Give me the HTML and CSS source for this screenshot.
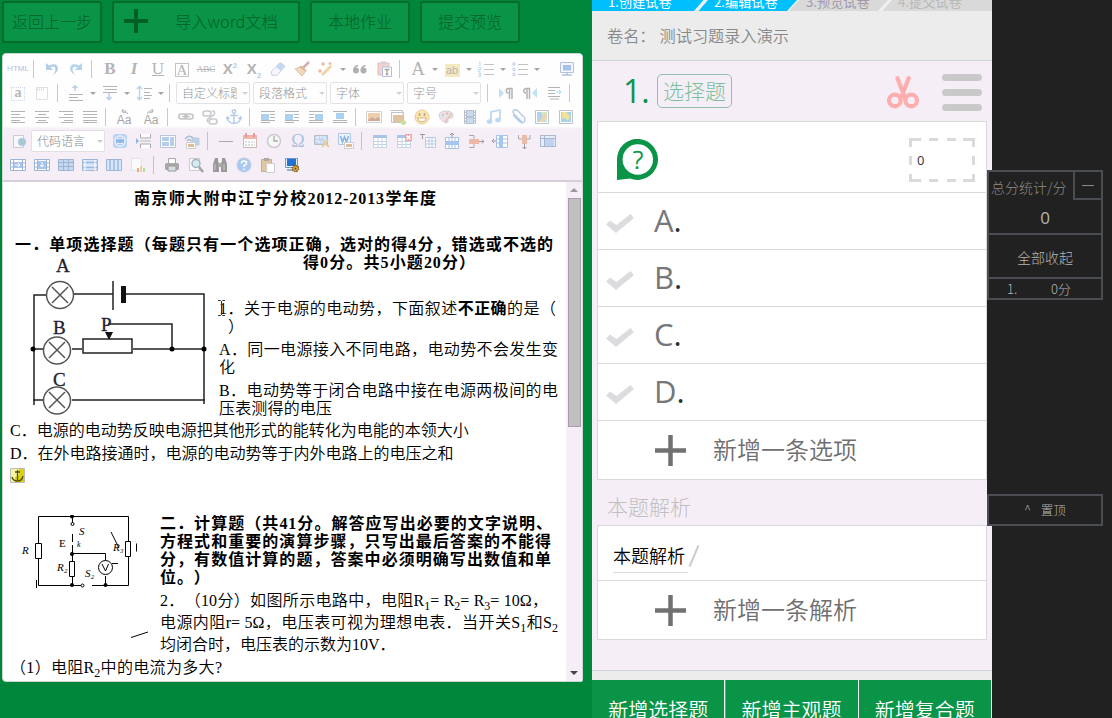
FILE: index.html
```html
<!DOCTYPE html>
<html lang="zh-CN">
<head>
<meta charset="utf-8">
<title>试卷录入</title>
<link rel="stylesheet" href="styles.css">
</head>
<body>
<svg class="sprite">
  <symbol id="undo" viewBox="0 0 16 16"><path d="M2 2v7h7L6.500 6.500Q11 4 11.500 8 11.500 11 9 14 14 11 14 7 13 1 5 4.500z" fill="#a9c8ea"/></symbol>
  <symbol id="redo" viewBox="0 0 16 16"><path d="M14 2v7H7l2.500-2.500Q5 4 4.500 8 4.500 11 7 14 2 11 2 7 3 1 11 4.500z" fill="#a9cdec"/></symbol>
  <symbol id="eraser" viewBox="0 0 16 16"><path d="M1 11 10 1.500 15 5 7 14.500 2 14z" fill="#f4f6fb" stroke="#c4cbd9"/><path d="M6 6 10 1.500 15 5 11 10z" fill="#bcd2ef"/></symbol>
  <symbol id="brush" viewBox="0 0 16 16"><path d="M15 1 9 7" stroke="#c9a8a0" stroke-width="2.500"/><path d="M1 8 8 5l4 5-4 5z" fill="#f0d6b0" stroke="#dcb99a"/><path d="M6 5.500 12 10" stroke="#d99" stroke-width="1.500"/></symbol>
  <symbol id="wand" viewBox="0 0 16 16"><path d="M4 14 13 5" stroke="#f0d09a" stroke-width="3"/><path d="M5 1v4M3 3h4M12 1v3M10.500 2.500h3M2 8v4M0 10h4" stroke="#eab79c" stroke-width="1.600"/></symbol>
  <symbol id="quote" viewBox="0 0 16 16"><g fill="#a6a6a6"><circle cx="4" cy="9.500" r="3"/><circle cx="11.500" cy="9.500" r="3"/></g><path d="M2 9.500Q2 5.500 6 4.500M9.500 9.500Q9.500 5.500 13.500 4.500" fill="none" stroke="#a6a6a6" stroke-width="1.800"/></symbol>
  <symbol id="paste" viewBox="0 0 16 16"><path d="M2 2h11v12H2z" fill="#f0cfc8" stroke="#dfb9b0"/><path d="M5 .500h5v3H5z" fill="#ccc"/><path d="M6.500 6h9v9.500h-9z" fill="#fff" stroke="#a9b6d6"/><path d="M8.500 8.500h5M11 8.500v5M9.700 13.500h2.600" stroke="#999" stroke-width="1.400"/></symbol>
  <symbol id="ol" viewBox="0 0 16 16"><path d="M6 3.500h10M6 8.500h10M6 13.500h10" stroke="#bbb"/><path d="M1 1h1v4M.500 6.500h2v2h-2v2h2M.500 12h2v3.500h-2m0-1.700h2" stroke="#b7d4ee" fill="none"/></symbol>
  <symbol id="ul" viewBox="0 0 16 16"><path d="M6 3.500h10M6 8.500h10M6 13.500h10" stroke="#bbb"/><g fill="none" stroke="#b7c4ee"><circle cx="2" cy="3" r="1.300"/><circle cx="2" cy="8.500" r="1.300"/><circle cx="2" cy="13.500" r="1.300"/></g></symbol>
  <symbol id="screen" viewBox="0 0 16 16"><path d="M1.500 1.500h13v10h-13z" fill="#f2f5fc" stroke="#a9b8dc"/><path d="M4 4h8v5.500H4z" fill="#9bb9e8"/><path d="M3 14h10M8 12v2" stroke="#a9b8dc" stroke-width="1.500"/></symbol>
  <symbol id="page" viewBox="0 0 16 16"><path d="M2.500 2.500h11v12h-11z" fill="#fff" stroke="#ddd"/><path d="M3 4.500h8" stroke="#ddc8e2" stroke-width="2" stroke-dasharray="1 1"/></symbol>
  <symbol id="rowup" viewBox="0 0 16 16"><path d="M1 9.500h14M1 12.500h9M1 15.500h14" stroke="#aaa"/><path d="M7 0v6M4.500 3 7 .700 9.500 3" stroke="#b0c9ee" fill="none" stroke-width="1.500"/></symbol>
  <symbol id="rowdn" viewBox="0 0 16 16"><path d="M1 1.500h14M3 4.500h12M1 7.500h14" stroke="#aaa"/><path d="M7 8v7M4.500 12 7 14.700 9.500 12" stroke="#b0c9ee" fill="none" stroke-width="1.500"/></symbol>
  <symbol id="lh" viewBox="0 0 16 16"><path d="M8 3.500h8M8 7.500h6M8 10.500h8M8 13.500h6" stroke="#aaa"/><path d="M3.500 1v14M1 4l2.500-2.700L6 4M1 12l2.500 2.700L6 12" stroke="#b0cdee" fill="none" stroke-width="1.400"/></symbol>
  <symbol id="ltr" viewBox="0 0 16 16"><path d="m1 3 5 5-5 5z" fill="#b5dff2"/><path d="M11.500 14V3.500h-1a2 2 0 0 0 0 4.500M14 14V3.500h-3" fill="none" stroke="#aaa" stroke-width="1.500"/></symbol>
  <symbol id="rtl" viewBox="0 0 16 16"><path d="m15 3-5 5 5 5z" fill="#b5dff2"/><path d="M5 14V3.500H4A2 2 0 0 0 4 8M7.500 14V3.500H4" fill="none" stroke="#aaa" stroke-width="1.500"/></symbol>
  <symbol id="indent" viewBox="0 0 16 16"><path d="M2 2.500h12M2 5.500h7M2 8.500h7M2 11.500h12M4 14h9" stroke="#aaa"/><path d="M10 7h5m-2-2 2 2-2 2" stroke="#9dd0ec" fill="none"/></symbol>
  <symbol id="al" viewBox="0 0 16 16"><path d="M1 2.500h14M1 5.500h9M1 8.500h14M1 11.500h9M1 13.500h14" stroke="#aaa"/></symbol>
  <symbol id="ac" viewBox="0 0 16 16"><path d="M1 2.500h14M4 5.500h8M1 8.500h14M4 11.500h8M2 13.500h12" stroke="#aaa"/></symbol>
  <symbol id="ar" viewBox="0 0 16 16"><path d="M1 2.500h14M6 5.500h9M1 8.500h14M6 11.500h9M3 13.500h12" stroke="#aaa"/></symbol>
  <symbol id="aj" viewBox="0 0 16 16"><path d="M1 2.500h14M1 5.500h14M1 8.500h14M1 11.500h14M1 13.500h14" stroke="#aaa"/></symbol>
  <symbol id="arcl" viewBox="0 0 12 6"><path d="M10.500 6Q9 1 3 2.500M4.500 0v4h4" fill="none" stroke="#999"/></symbol>
  <symbol id="arcr" viewBox="0 0 12 6"><path d="M1.500 6Q3 1 9 2.500M7.500 0v4h-4" fill="none" stroke="#999"/></symbol>
  <symbol id="link" viewBox="0 0 16 16"><g fill="none" stroke="#bbb" stroke-width="1.500"><rect x=".800" y="5" width="8" height="5" rx="2.500"/><rect x="7" y="5" width="8" height="5" rx="2.500"/><path d="M4 7.500h8"/></g></symbol>
  <symbol id="unlink" viewBox="0 0 16 16"><g fill="none" stroke="#c2c2c8" stroke-width="1.500"><rect x="1" y="2" width="8" height="5" rx="2.500"/><rect x="7" y="10" width="8" height="5" rx="2.500"/><path d="M10 2q4 0 2 4L7 9q-3 2-1 4"/></g></symbol>
  <symbol id="anchor" viewBox="0 0 16 16"><g fill="none" stroke="#afc6e4" stroke-width="1.500"><circle cx="8" cy="2.500" r="1.700"/><path d="M8 4v11M4 6.500h8M1.500 8.500q0 5.500 6.500 6 6.500-.500 6.500-6M0 10l1.500-2L3.500 10M12.500 10l2-2L16 10"/></g></symbol>
  <symbol id="fl" viewBox="0 0 16 16"><path d="M1 2.500h14M10 5.500h5M10 8.500h5M1 11.500h14M1 13.500h9" stroke="#aaa"/><path d="M1 5h8v6H1z" fill="#a2cdee"/></symbol>
  <symbol id="fr" viewBox="0 0 16 16"><path d="M1 2.500h14M1 5.500h5M1 8.500h5M1 11.500h14M1 13.500h14" stroke="#aaa"/><path d="M7 5h8v6H7z" fill="#a2cdee"/></symbol>
  <symbol id="fc" viewBox="0 0 16 16"><path d="M1 2.500h14M1 13.500h14M1 11.500h14" stroke="#aaa"/><path d="M4 4h8v6H4z" fill="#9ccdf0"/></symbol>
  <symbol id="pic" viewBox="0 0 16 16"><path d="M.500 2.500h15v11H.500z" fill="#fff" stroke="#ccc"/><path d="M2 4h12v8H2z" fill="#efc9a2"/><path d="m2 11 4-3 3 2 3-2 2 2v2H2z" fill="#c99f88"/></symbol>
  <symbol id="pics" viewBox="0 0 16 16"><path d="M.500 1.500h12v3M1.500 3.500h12v10h-12z" fill="#fff" stroke="#bbb"/><path d="M3 6h10v7H3z" fill="#dfbb92"/><circle cx="13.500" cy="13.500" r="2.500" fill="#bfe08b"/></symbol>
  <symbol id="smile" viewBox="0 0 16 16"><circle cx="8" cy="8" r="7" fill="#fbe3a6" stroke="#eac58c"/><path d="M5.500 4v3M10.500 4v3" stroke="#a98" stroke-width="1.500"/><path d="M3.500 9h9q-1 4-4.500 4T3.500 9z" fill="#fff" stroke="#d8a670"/></symbol>
  <symbol id="palette" viewBox="0 0 16 16"><path d="M8 2q7 0 7 5 0 3-4 2-2 0-1 3 0 3-4 1Q1 10 1 6q1-4 7-4z" fill="#eadcea" stroke="#d4c6dc"/><path d="m7 13 7-9" stroke="#dfc49d" stroke-width="2"/><circle cx="5" cy="6" r="1.200" fill="#a8d5a8"/><circle cx="9" cy="4.500" r="1.200" fill="#eaa"/></symbol>
  <symbol id="film" viewBox="0 0 16 16"><path d="M2 1h12v14H2z" fill="#b2b8c4"/><path d="M5 2h6v5H5zM5 9h6v5H5z" fill="#bed6f2"/><path d="M3.500 1v14M12.500 1v14" stroke="#fff" stroke-dasharray="1.500 1.500"/></symbol>
  <symbol id="music" viewBox="0 0 16 16"><path d="M5 12V3l9-2v9" stroke="#b5d0ec" fill="none" stroke-width="1.700"/><ellipse cx="3.500" cy="12.500" rx="2.800" ry="2.300" fill="#b5d3f0"/><ellipse cx="12" cy="11" rx="2.800" ry="2.300" fill="#b5d3f0"/></symbol>
  <symbol id="clip" viewBox="0 0 16 16"><path d="m12 13-8-8q-2-3 0-4 2-1 4 1l6 6q2 3 0 5-2 2-5-1L3 6" fill="none" stroke="#a9c4e6" stroke-width="1.400"/></symbol>
  <symbol id="map" viewBox="0 0 16 16"><path d="M1.500 1.500h13v13h-13z" fill="#fff" stroke="#b4bcc4"/><path d="M3 3h10v10H3z" fill="#cfe4bd"/><path d="M3 3h4l4 10H3z" fill="#a8cfe8"/><path d="m5 13 5-8h3v3l-4 5z" fill="#ecd0aa"/></symbol>
  <symbol id="map2" viewBox="0 0 16 16"><path d="M1.500 1.500h13v13h-13z" fill="#fff" stroke="#b4bcc4"/><path d="M3 3h10v10H3z" fill="#98ccea"/><path d="M4 3h4l4 4-2 5-3-3-3 1z" fill="#eee08d"/></symbol>
  <symbol id="globe" viewBox="0 0 16 16"><path d="M2.500 2.500h10v12h-10z" fill="#f8f8f8" stroke="#ccc"/><circle cx="11" cy="9" r="4" fill="#a9c6e8"/><path d="m9 7 4 1-2 4z" fill="#a5d0a5"/></symbol>
  <symbol id="app" viewBox="0 0 16 16"><rect x="1" y="1" width="14" height="14" rx="3" fill="#bcd4f4"/><circle cx="8" cy="8" r="5" fill="#92b8e8" stroke="#eef" stroke-width="1.500"/><path d="M5 6q3-2 6 0M5 10q3 2 6 0" stroke="#fff" fill="none"/></symbol>
  <symbol id="break" viewBox="0 0 16 16"><path d="M4.500 1v4h10V1M4.500 15v-4h10v4" fill="#fff" stroke="#a9a9b0"/><path d="M4 8h11" stroke="#bbb"/><path d="m0 5 3 3-3 3z" fill="#8db4d8"/></symbol>
  <symbol id="tpl" viewBox="0 0 16 16"><path d="M.500 2.500h15v12H.500z" fill="#fff" stroke="#b6c4da"/><path d="M2 4h7v4H2zM10 4h4v9h-4zM2 9h7v4H2z" fill="#b5cdec"/></symbol>
  <symbol id="wifi" viewBox="0 0 16 16"><path d="M8 5h7v7H8z" fill="#bbd1ed" stroke="#c3cbd8"/><path d="M1 6q4-5 8-1M3 8q2-3 4 0" stroke="#a8bcd5" fill="none" stroke-width="1.500"/><path d="M2.500 9.500h9v6h-9z" fill="#fff" stroke="#ccc"/><path d="M4 11h6v3H4z" fill="#e0bd94"/></symbol>
  <symbol id="hr" viewBox="0 0 16 16"><path d="M1 8.500h14" stroke="#a9a9a9"/></symbol>
  <symbol id="cal" viewBox="0 0 16 16"><path d="M1.500 2.500h13v12h-13z" fill="#fff" stroke="#d0b8b5"/><path d="M1 2h14v4H1z" fill="#f2b5a9"/><path d="M4 0v4M12 0v4" stroke="#d88" stroke-width="1.500"/><path d="M3 9h10M3 12h10" stroke="#bbb" stroke-dasharray="2 1"/></symbol>
  <symbol id="clock" viewBox="0 0 16 16"><circle cx="8" cy="8" r="6.500" fill="#f7f7f7" stroke="#ccc" stroke-width="1.500"/><path d="M8 3v5h4" fill="none" stroke="#aaa" stroke-width="1.300"/></symbol>
  <symbol id="snap" viewBox="0 0 16 16"><path d="M.500 2.500h13v9H.500z" fill="#c3d8f0" stroke="#b5bfcc"/><path d="M3 4h8v5H3z" fill="none" stroke="#fff" stroke-dasharray="2 1"/><path d="m8 14 6-7M9 8l6 6" stroke="#dfcfa0" stroke-width="2"/></symbol>
  <symbol id="word" viewBox="0 0 16 16"><path d="M.500.500h12v11H.500z" fill="#eef4fc" stroke="#b0c8e4"/><path d="m2.500 3 2 6 2-5 2 5 2-6" fill="none" stroke="#8cb2e0" stroke-width="1.600"/><path d="M6.500 9.500h9v6h-9z" fill="#fff" stroke="#ccc"/><path d="M8 11h6v3H8z" fill="#dfbd9b"/></symbol>
  <symbol id="grid" viewBox="0 0 16 16"><path d="M1.500 2.500h13v12h-13zM1.500 8.500h13M1.500 11.500h13M6 5v9M10 5v9" fill="#fff" stroke="#c3d4e6"/><path d="M1 2h14v3H1z" fill="#a9c4e4"/></symbol>
  <symbol id="griddel" viewBox="0 0 16 16"><path d="M1.500 2.500h13v12h-13zM1.500 8.500h13M1.500 11.500h13M6 5v9M10 5v9" fill="#fff" stroke="#c3d4e6"/><path d="M1 2h14v3H1z" fill="#a9c4e4"/><path d="M9 1h7v7H9z" fill="#f0a5a5"/><path d="m10.500 2.500 4 4m0-4-4 4" stroke="#fff" stroke-width="1.500"/></symbol>
  <symbol id="tcell" viewBox="0 0 16 16"><path d="M0 1.500h5M2.500 1v5" stroke="#999"/><path d="M5.500 4.500h10v10h-10zM5.500 8h10M5.500 11h10M9 4v10M12 4v10" stroke="#b3c9e4" fill="#fff"/></symbol>
  <symbol id="insrow" viewBox="0 0 16 16"><path d="M1.500 4.500h13v11h-13zM5 5v10M8 5v10M11 5v10" stroke="#a9c1e2" fill="#fff"/><path d="M1 8h14v4H1z" fill="#a5c6ef"/><path d="M8 0v4M6 2l2-2 2 2" stroke="#999" fill="none"/></symbol>
  <symbol id="delrow" viewBox="0 0 16 16"><path d="M1 2.500h5v4M1 14.500h5v-4" fill="none" stroke="#aaa"/><path d="M1 6h10v5H1z" fill="#edb9a9"/><path d="M11 8.500h5m-2-2 2 2-2 2" stroke="#999" fill="none"/></symbol>
  <symbol id="inscol" viewBox="0 0 16 16"><path d="M4.500 2.500h11v12h-11zM4.500 6h11M4.500 10h11" stroke="#a9c1e2" fill="#fff"/><path d="M7 2h4v13H7z" fill="#a5c6ef"/><path d="M4 8H0m2-2L0 8l2 2" stroke="#999" fill="none"/></symbol>
  <symbol id="delcol" viewBox="0 0 16 16"><path d="M2.500 2v4h4M14 2v4h-4" fill="none" stroke="#aaa"/><path d="M6 2h5v9H6z" fill="#edb9a9"/><path d="M8.500 11v5m-2-2 2 2 2-2" stroke="#999" fill="none"/></symbol>
  <symbol id="merge" viewBox="0 0 16 16"><path d="M.500 2.500h15v11H.500zM.500 5.500h15M4.500 2v12" fill="#e4ecf8" stroke="#a6b7d0"/><path d="M5 6h9v7H5z" fill="#c0d4ef"/></symbol>
  <symbol id="cells" viewBox="0 0 16 16"><path d="M.500 2.500h15v11H.500zM3.500 2v11M12.500 2v11M.500 6h3M.500 10h3M12.500 6h3M12.500 10h3" fill="#fff" stroke="#9db5d2"/><path d="M4 5h8v6H4z" fill="#a6c4ec"/><path d="M5 8h5m-2-2 2 2-2 2" fill="none" stroke="#fff"/></symbol>
  <symbol id="cellsdn" viewBox="0 0 16 16"><path d="M.500 2.500h15v11H.500zM3.500 2v11M12.500 2v11M.500 6h3M.500 10h3M12.500 6h3M12.500 10h3" fill="#fff" stroke="#9db5d2"/><path d="M4 4h8v8H4z" fill="#a6c4ec"/><path d="M8 5v5m-2-2 2 2 2-2" fill="none" stroke="#fff"/></symbol>
  <symbol id="cells2" viewBox="0 0 16 16"><path d="M.500 2.500h15v11H.500z" fill="#c5d8f0" stroke="#9db5d2"/><path d="M.500 5.500h15M.500 9.500h15M5.500 3v11M10.500 3v11" stroke="#9db5d2"/></symbol>
  <symbol id="cells3" viewBox="0 0 16 16"><path d="M.500 2.500h15v11H.500z" fill="#d7e6f8" stroke="#9db5d2"/><path d="M1 5.500h14M1 10.500h14" stroke="#9bb9de" stroke-width="1.500"/><path d="M3 3v11M13 3v11" stroke="#fff"/></symbol>
  <symbol id="cells4" viewBox="0 0 16 16"><path d="M.500 2.500h15v11H.500z" fill="#d7e6f8" stroke="#9db5d2"/><path d="M4 3v11M8 3v11M12 3v11" stroke="#9bb9de" stroke-width="1.500"/></symbol>
  <symbol id="chart" viewBox="0 0 16 16"><path d="M1.500 1.500h10v12h-10z" fill="#fafafa" stroke="#e6e3e8"/><path d="M7 11h2v4H7z" fill="#e8a9a0"/><path d="M10 9h2v6h-2z" fill="#ecd58c"/><path d="M13 11h2v4h-2z" fill="#b8dc9c"/></symbol>
  <symbol id="print" viewBox="0 0 16 16"><path d="M4.500 1.500h7v5h-7z" fill="#fff" stroke="#aaa"/><rect x="1" y="6" width="14" height="7" rx="1.500" fill="#aaa"/><path d="M4 9h8v5H4z" fill="#d8dde4" stroke="#999"/></symbol>
  <symbol id="preview" viewBox="0 0 16 16"><path d="M1.500 1.500h10v12h-10z" fill="#fafafa" stroke="#ccc"/><circle cx="8" cy="6.500" r="4" fill="#d6eaf4" stroke="#a3b3b8" stroke-width="1.500"/><path d="m11 10 4 5" stroke="#a3a3a3" stroke-width="2.500"/></symbol>
  <symbol id="find" viewBox="0 0 16 16"><path d="M3 1h3v3l1 2v9H1V7zM13 1h-3v3L9 6v9h6V7z" fill="#999"/><path d="M6 6h4v4H6z" fill="#aaa"/><path d="M3 7v6M12 7v6" stroke="#ccc"/></symbol>
  <symbol id="help" viewBox="0 0 16 16"><circle cx="8" cy="8" r="7" fill="#a9c8f2" stroke="#c3cde0"/><path d="M5.500 6.500Q5.500 4 8 4q3 0 2.500 2.500Q10 8 8 8.500V10M8 11.500v1.500" fill="none" stroke="#fff" stroke-width="1.500"/></symbol>
  <symbol id="board" viewBox="0 0 16 16"><path d="M1.500 2.500h10v12h-10z" fill="#e2c79e" stroke="#caae8a"/><path d="M4 1h5v3H4z" fill="#aaa"/><path d="M6.500 6.500h8v9h-8z" fill="#fff" stroke="#ccc"/></symbol>
  <symbol id="gear" viewBox="0 0 16 16"><path d="M1.500 1.500h12v9h-12z" fill="#eaf3ff" stroke="#6a9bd0"/><path d="M3 2h9v7H3z" fill="#2573cf"/><path d="M3 13h7" stroke="#6a9bd0" stroke-width="1.500"/><circle cx="11.500" cy="11.500" r="3" fill="#e7b347" stroke="#7c4f15" stroke-width="1.500" stroke-dasharray="1.500 .800"/><circle cx="11.500" cy="11.500" r="1" fill="#543"/></symbol>
  <symbol id="check" viewBox="0 0 28 19"><path d="m0 10.500 4-4 6.500 4.500L24.500 0 28 4 10 19z" fill="#dcdcde"/></symbol>
  <symbol id="plus" viewBox="0 0 31 31"><path d="M0 15.500h31M15.500 0v31" stroke="#717173" stroke-width="4.500"/></symbol>
</svg>

<div class="app">
  <section class="left">
    <nav class="actions">
      <button class="btn narrow">返回上一步</button>
      <button class="btn import"><svg width="24" height="24" viewBox="0 0 24 24"><path d="M0 12h24M12 0v24" stroke="#005f25" stroke-width="4"/></svg><span>导入word文档</span></button>
      <button class="btn narrow">本地作业</button>
      <button class="btn narrow">提交预览</button>
    </nav>

    <div class="editor">
      <div class="toolbar">
        <div class="row faded">
          <b class="t html">HTML</b><i class="sep"></i>
          <svg class="ic"><use href="#undo"/></svg><svg class="ic"><use href="#redo"/></svg><i class="sep"></i>
          <b class="t">B</b><b class="t it">I</b><span class="t un">U</span><span class="t"><span class="boxed">A</span></span><span class="t strike">ABC</span><b class="t x">X<sup>2</sup></b><b class="t x">X<sub>2</sub></b>
          <svg class="ic"><use href="#eraser"/></svg><svg class="ic"><use href="#brush"/></svg><svg class="ic"><use href="#wand"/></svg><i class="dd"></i>
          <svg class="ic"><use href="#quote"/></svg><svg class="ic"><use href="#paste"/></svg><i class="sep"></i>
          <span class="t big">A</span><i class="dd"></i><span class="t"><span class="mark">ab</span></span><i class="dd"></i>
          <svg class="ic"><use href="#ol"/></svg><i class="dd"></i><svg class="ic"><use href="#ul"/></svg><i class="dd"></i>
          <svg class="ic end"><use href="#screen"/></svg>
        </div>
        <div class="row faded">
          <b class="t"><span class="dots">a</span></b><svg class="ic"><use href="#page"/></svg><i class="sep"></i>
          <svg class="ic"><use href="#rowup"/></svg><i class="dd"></i><svg class="ic"><use href="#rowdn"/></svg><i class="dd"></i><svg class="ic"><use href="#lh"/></svg><i class="dd"></i><i class="sep"></i>
          <span class="sel"><span>自定义标题</span></span><span class="sel"><span>段落格式</span></span><span class="sel"><span>字体</span></span><span class="sel"><span>字号</span></span><i class="sep"></i>
          <svg class="ic"><use href="#ltr"/></svg><svg class="ic"><use href="#rtl"/></svg><svg class="ic"><use href="#indent"/></svg><i class="sep"></i>
        </div>
        <div class="row faded">
          <svg class="ic"><use href="#al"/></svg><svg class="ic"><use href="#ac"/></svg><svg class="ic"><use href="#ar"/></svg><svg class="ic"><use href="#aj"/></svg><i class="sep"></i>
          <span class="t case"><svg><use href="#arcl"/></svg>Aa</span><span class="t case second-case"><svg><use href="#arcr"/></svg>Aa</span><i class="sep"></i>
          <svg class="ic"><use href="#link"/></svg><svg class="ic"><use href="#unlink"/></svg><svg class="ic"><use href="#anchor"/></svg><i class="sep"></i>
          <svg class="ic"><use href="#fl"/></svg><svg class="ic"><use href="#fl"/></svg><svg class="ic"><use href="#fr"/></svg><svg class="ic"><use href="#fc"/></svg><i class="sep"></i>
          <svg class="ic"><use href="#pic"/></svg><svg class="ic"><use href="#pics"/></svg><svg class="ic"><use href="#smile"/></svg><svg class="ic"><use href="#palette"/></svg><svg class="ic"><use href="#film"/></svg><svg class="ic"><use href="#music"/></svg><svg class="ic"><use href="#clip"/></svg><svg class="ic"><use href="#map"/></svg><svg class="ic"><use href="#map2"/></svg>
        </div>
        <div class="row shifted">
          <svg class="ic"><use href="#globe"/></svg><span class="sel"><span>代码语言</span></span>
          <svg class="ic"><use href="#app"/></svg><svg class="ic"><use href="#break"/></svg><svg class="ic"><use href="#tpl"/></svg><svg class="ic"><use href="#wifi"/></svg><i class="sep"></i>
          <svg class="ic"><use href="#hr"/></svg><svg class="ic"><use href="#cal"/></svg><svg class="ic"><use href="#clock"/></svg><span class="t omega">Ω</span><svg class="ic"><use href="#snap"/></svg><svg class="ic"><use href="#word"/></svg><i class="sep"></i>
          <svg class="ic"><use href="#grid"/></svg><svg class="ic"><use href="#griddel"/></svg><svg class="ic"><use href="#tcell"/></svg><svg class="ic"><use href="#insrow"/></svg><svg class="ic"><use href="#delrow"/></svg><svg class="ic"><use href="#inscol"/></svg><svg class="ic"><use href="#delcol"/></svg><svg class="ic"><use href="#merge"/></svg>
        </div>
        <div class="row">
          <svg class="ic"><use href="#cells"/></svg><svg class="ic"><use href="#cellsdn"/></svg><svg class="ic"><use href="#cells2"/></svg><svg class="ic"><use href="#cells3"/></svg><svg class="ic"><use href="#cells4"/></svg><svg class="ic"><use href="#chart"/></svg><i class="sep"></i>
          <svg class="ic"><use href="#print"/></svg><svg class="ic"><use href="#preview"/></svg><svg class="ic"><use href="#find"/></svg><svg class="ic"><use href="#help"/></svg><svg class="ic"><use href="#board"/></svg><svg class="ic"><use href="#gear"/></svg>
        </div>
      </div>

      <div class="view">
        <article class="doc">
          <p class="line bold title">南京师大附中江宁分校2012-2013学年度</p>
          <p class="line bold h1">一．单项选择题（每题只有一个选项正确，选对的得4分，错选或不选的</p>
          <div class="split">
            <svg class="fig1" width="209" height="165" viewBox="0 0 209 165">
              <g fill="none" stroke="#222" stroke-width="1.500">
                <path d="M45 41H31v110M71 40h39M123 40h78v110M43 95h-13M69 95h10M130 95h71M43 146H30M69 146h133"/>
                <path d="M105 70h64v24"/>
                <rect x="80" y="85" width="49" height="14"/>
                <path d="M110 27v29"/>
                <g stroke="#555" fill="#fff"><circle cx="57" cy="41" r="13.500"/><circle cx="54" cy="96.500" r="13.500"/><circle cx="54" cy="146.500" r="13.500"/><path d="m49 33 16 16m0-16L49 49M46 88l16 16m0-16-16 16M46 138l16 16m0-16-16 16"/></g>
              </g>
              <path d="M118 32h5v17h-5zM102 78h8l-4 8z" fill="#111"/>
              <circle cx="30" cy="95" r="2.500"/><circle cx="169" cy="95" r="2.500"/><circle cx="201" cy="95" r="2.500"/>
              <g font-family="Liberation Serif" font-size="19" fill="#223" stroke="#223" stroke-width=".3"><text x="53" y="18">A</text><text x="50" y="80">B</text><text x="98" y="77">P</text><text x="50" y="132">C</text></g>
            </svg>
            <div class="col1">
              <p class="line bold h2">得0分。共5小题20分）</p>
              <p class="line q1">1．关于电源的电动势，下面叙述<b>不正确</b>的是（</p>
              <p class="line q1b">）</p>
              <p class="line wide gap">A．同一电源接入不同电路，电动势不会发生变</p>
              <p class="line left-only">化</p>
              <p class="line wide gap">B．电动势等于闭合电路中接在电源两极间的电</p>
              <p class="line w112">压表测得的电压</p>
              <svg class="caret" width="7" height="16" viewBox="0 0 7 16"><path d="M0 .500h2.500l1 1 1-1H7M0 15.500h2.500l1-1 1 1H7M3.500 1v14" fill="none" stroke="#333"/></svg>
            </div>
          </div>
          <p class="line optc">C．电源的电动势反映电源把其他形式的能转化为电能的本领大小</p>
          <p class="line optd gap">D．在外电路接通时，电源的电动势等于内外电路上的电压之和</p>
          <svg class="mark-ic" width="15" height="15" viewBox="0 0 15 15"><path d="M.500.500h14v14H.500z" fill="#f5f3a2" stroke="#bbb"/><path d="M9 1h5v13H5V9l4-2z" fill="#ded200"/><path d="M7.500 2v10M5 4h5M2 9q1 4 5.500 4T13 8" fill="none" stroke="#554f00" stroke-width="1.300"/></svg>
          <div class="split second">
            <svg class="fig2" width="150" height="140" viewBox="0 0 150 140">
              <g fill="none" stroke="#000">
                <path d="M28.500 28.500V1.500h90V27M28.500 44v26.500h44M118.500 41v29.500H82M62.500 1v7M62.500 19v8M62.500 30v16M62.500 62v8M62.500 38.500h33v7M95.500 61v9M26.500 65v8M126.500 28.500v8M101 17l8 16M102 48.500h6M121 122.500l17-5.500"/>
                <path d="M25.500 28.500h6v15h-6zM115.500 26.500h5v15h-5zM59.500 46.500h5v15h-5z" fill="#fff"/>
                <circle cx="95.500" cy="52.500" r="7" fill="#fff"/><path d="m92 49 3.500 7 3-7"/>
                <circle cx="62.500" cy="9" r="1.500" fill="#fff"/><circle cx="72.500" cy="70.500" r="1.500" fill="#fff"/>
              </g>
              <circle cx="62" cy="1.500" r="2"/><circle cx="62" cy="39" r="2"/><circle cx="62" cy="70" r="2"/><circle cx="95.500" cy="70" r="2"/>
              <g font-family="Liberation Serif" font-size="11" font-style="italic"><text x="12" y="39">R</text><text x="49" y="32" font-style="normal">E</text><text x="69" y="20">S</text><text x="67" y="32" font-size="8">k</text><text x="47" y="56">R₂</text><text x="75" y="62">S₂</text><text x="103" y="36">R₃</text></g>
            </svg>
            <div class="col2">
              <p class="line bold s1">二．计算题（共41分。解答应写出必要的文字说明、</p>
              <p class="line bold s2">方程式和重要的演算步骤，只写出最后答案的不能得</p>
              <p class="line bold s2">分，有数值计算的题，答案中必须明确写出数值和单</p>
              <p class="line bold left-only">位。）</p>
              <p class="line tall p1">2．（10分）如图所示电路中，电阻R<sub>1</sub>= R<sub>2</sub>= R<sub>3</sub>= 10Ω，</p>
              <p class="line tall p2">电源内阻r= 5Ω，电压表可视为理想电表．当开关S<sub>1</sub>和S<sub>2</sub></p>
              <p class="line tall p3">均闭合时，电压表的示数为10V．</p>
            </div>
          </div>
          <p class="line tall last">（1）电阻R<sub>2</sub>中的电流为多大?</p>
        </article>
        <div class="scroll"><i class="up"></i><i class="thumb"></i><i class="down"></i></div>
      </div>
    </div>
  </section>

  <main class="panel">
    <header class="steps">
      <svg class="steps-bg" width="400" height="11" viewBox="0 0 400 11"><path d="M0 0h400v11H0z" fill="#f0f0f0"/><path d="M0 0h111.500L102 11H0z" fill="#00bfff"/><path d="M116 0h89l-10 11h-88.500z" fill="#00bfff"/><path d="M207 0h89l-10 11h-89zM300 0h100v11H290z" fill="#d9d9d9"/></svg>
      <span class="step on">1.创建试卷</span><span class="step on">2.编辑试卷</span><span class="step third">3.预览试卷</span><span class="step off">4.提交试卷</span>
    </header>
    <div class="name"><span>卷名：</span><span>测试习题录入演示</span></div>
    <div class="body">
      <div class="qhead">
        <span class="num">1.</span><span class="chip">选择题</span>
        <svg class="cut" width="32" height="33" viewBox="0 0 32 33"><g fill="none" stroke="#ffaeb0"><circle cx="7.800" cy="24.500" r="5.800" stroke-width="4.200"/><circle cx="24.200" cy="24.500" r="5.800" stroke-width="4.200"/><path d="M10.500 2.200 18 22M21.700 2.200 14 22" stroke-width="4.200" stroke-linecap="round"/></g></svg>
        <span class="menu"><i></i><i></i><i></i></span>
      </div>
      <div class="card">
        <div class="ask">
          <svg width="42" height="42" viewBox="0 0 42 42"><path d="M0 41V21a20.500 20.500 0 1 1 13 18.500z" fill="#0a9448"/><circle cx="20.800" cy="20.500" r="15.200" fill="#fff"/><path d="M6 29 5 37l7-3z" fill="#0a9448"/><text x="21" y="30" text-anchor="middle" font-family="Noto Sans" font-size="25" fill="#0a9448" stroke="#0a9448" stroke-width=".5">?</text></svg>
          <span class="score">0<svg width="66" height="44" viewBox="0 0 66 44"><path d="M0 1.500h12M20 1.500h9M38 1.500h9M54 1.500h12M0 42.500h12M20 42.500h9M38 42.500h9M54 42.500h12M1.500 0v9M64.500 0v9M1.500 18v9M64.500 18v9M1.500 36v8M64.500 36v8" stroke="#dadadc" stroke-width="3" fill="none"/></svg></span>
        </div>
        <div class="opt"><svg width="28" height="19"><use href="#check"/></svg><span>A<i>.</i></span></div>
        <div class="opt"><svg width="28" height="19"><use href="#check"/></svg><span>B<i>.</i></span></div>
        <div class="opt"><svg width="28" height="19"><use href="#check"/></svg><span>C<i>.</i></span></div>
        <div class="opt"><svg width="28" height="19"><use href="#check"/></svg><span>D<i>.</i></span></div>
        <div class="add"><svg width="31" height="31"><use href="#plus"/></svg><span>新增一条选项</span></div>
      </div>
      <h3 class="sub">本题解析</h3>
      <div class="card">
        <div class="ana"><span>本题解析</span><svg width="12" height="22" viewBox="0 0 12 22"><path d="M1.500 21.500 10.500.500" stroke="#ccc" stroke-width="2"/></svg></div>
        <div class="add"><svg width="31" height="31"><use href="#plus"/></svg><span>新增一条解析</span></div>
      </div>
    </div>
    <footer class="foot"><button>新增选择题</button><button>新增主观题</button><button>新增复合题</button></footer>
  </main>

  <aside class="float">
    <div class="stats">
      <div class="total"><div class="cap"><span>总分统计/分</span><i class="min"></i></div><div class="zero">0</div></div>
      <div class="fold">全部收起</div>
      <div class="item"><span>1.</span><span>0分</span></div>
    </div>
    <div class="top"><span>^</span><span>置顶</span></div>
  </aside>
</div>
</body>
</html>
```
FILE: styles.css
```css
* { box-sizing: border-box; }
body { margin: 0; background: #212121; font-family: "Open Sans", "Noto Sans CJK SC", sans-serif; overflow: hidden; }
p, h3 { margin: 0; }
i { font-style: normal; }
button { font: inherit; padding: 0; }
.sprite { display: none; }
.app { position: relative; display: flex; width: 1112px; height: 718px; overflow: hidden; }
.left { width: 592px; height: 718px; background: #00863a; }

.actions { display: flex; gap: 10px; padding: 1px 0 0 2px; height: 52px; }
.btn { height: 42px; border: 2px solid #006b2b; border-radius: 3px; background: #0a9448; color: #006026; font-size: 16px; font-weight: 300; line-height: 36px; padding-bottom: 2px; font-family: "Noto Sans CJK SC", sans-serif; }
.narrow { width: 100px; }
.import { width: 188px; display: flex; align-items: center; padding-left: 10px; gap: 27px; font-size: 16.300px; }

.editor { width: 581px; height: 629px; margin: 1px 0 0 2px; background: #fff; border: 1px solid #cfd8d2; border-radius: 4px 4px 2px 4px; overflow: hidden; }
.toolbar { height: 128px; padding: 3px 0 0 3px; background: linear-gradient(#fefefe 0 72px, #f5eef6 75px); border-bottom: 2px solid #d5cfd9; }
.row { display: flex; align-items: center; height: 24px; }
.faded { opacity: .88; }
.shifted { padding-left: 1px; }
.ic { width: 16px; height: 16px; margin: 0 4px; flex: none; }
.end { margin-left: auto; margin-right: 7px; }
.sep { width: 10px; height: 18px; flex: none; background: linear-gradient(#c0c4c8, #c0c4c8) 3px 0 / 1px 18px no-repeat; }
.dd { width: 10px; flex: none; display: flex; justify-content: center; }
.dd::after { content: ""; border: 3px solid transparent; border-top-color: #999; border-bottom: 0; }
.t { width: 24px; flex: none; text-align: center; font: 17px/20px "Liberation Serif", serif; color: #aaa; white-space: nowrap; }
b.t { font-weight: 700; }
.html { font: 8px/20px "Liberation Sans", sans-serif; color: #a9bbd6; }
b.html { font-weight: 400; }
.it { font-style: italic; }
.un { text-decoration: underline; }
.boxed { display: inline-block; width: 14px; height: 14px; border: 1px solid #bbb; line-height: 13px; font-size: 15px; vertical-align: middle; }
.strike { font-size: 9px; text-decoration: line-through; }
.x { font: 15px/20px "Liberation Sans", sans-serif; }
.x sup, .x sub { font-size: 8px; color: #adc8e8; line-height: 0; }
.big { font-size: 19px; }
.mark { display: inline-block; background: #f5e7b8; font: 11px/13px "Liberation Sans", sans-serif; width: 15px; vertical-align: middle; }
.dots { display: inline-block; width: 14px; height: 14px; border: 1px dotted #c9d3ea; line-height: 10px; font-size: 14px; vertical-align: middle; }
.sel { width: 74px; height: 22px; margin-right: 3px; flex: none; border: 1px solid #e2dfe4; border-radius: 2px; background: #fff; display: flex; align-items: center; justify-content: space-between; font: 12px/20px "Noto Sans CJK SC", sans-serif; font-weight: 300; color: #888; padding-left: 5px; }
.sel span { width: 55px; overflow: hidden; white-space: nowrap; }
.sel::after { content: ""; border: 3px solid transparent; border-top-color: #ccc; border-bottom: 0; margin-right: 1px; }
.case { display: flex; flex-direction: column; align-items: center; font: 12px/12px "Liberation Sans", sans-serif; color: #999; }
.case svg { width: 12px; height: 5px; }
.second-case { margin: 0 1px 0 3px; }
.omega { color: #a9c0e0; font-size: 18px; }

.view { display: flex; height: 499px; }
.doc { flex: 1; padding: 8px 0 0 7px; font-family: "Liberation Serif", "Noto Sans CJK SC", serif; font-size: 16px; color: #000; font-weight: 350; overflow: hidden; text-spacing-trim: space-all; }
.line { height: 18px; line-height: 18px; white-space: nowrap; text-align-last: justify; }
.line sub { font-size: 12px; line-height: 0; vertical-align: -4px; }
.bold, .line b { font-weight: 700; }
.bold { letter-spacing: .9px; }
.title { width: 303px; margin-left: 124px; }
.h1 { width: 539px; margin: 28px 0 0 5px; }
.split { display: flex; }
.fig1 { flex: none; overflow: visible; margin-left: -7px; margin-right: 7px; }
.col1 { position: relative; height: 165px; }
.h2 { width: 173px; margin: 0 0 28px 84px; }
.q1 { width: 337px; }
.q1b { text-align-last: left; padding-left: 9px; }
.gap { margin-top: 5px; }
.wide { width: 339px; }
.left-only { text-align-last: left; }
.w112 { width: 113px; }
.caret { position: absolute; left: -1px; top: 46px; }
.optc { width: 456px; margin-top: 3px; }
.optd { width: 440px; }
.mark-ic { display: block; margin-top: 5px; }
.second { height: 143px; margin-top: 32px; }
.fig2 { flex: none; }
.s1 { width: 393px; }
.s2 { width: 392px; }
.tall { height: 22px; line-height: 22px; }
.p1 { width: 388px; margin-top: 3px; }
.p2 { width: 398px; }
.p3 { width: 230px; }
.last { width: 212px; line-height: 19px; }
.scroll { width: 16px; flex: none; background: #f5eef6; display: flex; flex-direction: column; align-items: center; padding: 6px 0 6px; }
.up { border: 4px solid transparent; border-bottom-color: #999; border-top: 0; margin-bottom: 6px; }
.thumb { width: 13px; height: 229px; background: #c0c0c0; border: 1px solid #aa9cad; }
.down { border: 4px solid transparent; border-top-color: #444; border-bottom: 0; margin-top: auto; }

.panel { width: 400px; height: 718px; background: #ececec; display: flex; flex-direction: column; font-weight: 300; }
.steps { position: relative; display: flex; height: 11px; overflow: hidden; font: 13.200px/18px "Noto Sans CJK SC", sans-serif; }
.steps-bg { position: absolute; left: 0; top: 0; }
.step { position: relative; width: 92px; margin-top: -7px; padding-left: 16px; color: #fff; flex: none; white-space: nowrap; }
.step + .step { margin-left: 14px; }
.step + .third { margin-left: 0; }
.step + .off { margin-left: 0; }
.third { color: #a398a8; }
.off { color: #b8b8b8; }
.name { height: 49px; padding-left: 15px; display: flex; gap: 4px; font: 350 16.200px/49px "Noto Sans CJK SC", sans-serif; color: #888; }
.body { height: 611px; border: solid #ccd2d5; border-width: 1px 0; background: #f5eef6; padding: 0 5px; }
.qhead { height: 60px; display: flex; align-items: center; padding: 0 5px 0 26px; }
.num { width: 34px; font-size: 32px; font-weight: 400; color: #0a9448; line-height: 40px; }
.chip { width: 75px; height: 34px; border: 1px solid #93bfaa; border-radius: 5px; text-align: center; font: 300 21px/31px "Noto Sans CJK SC", sans-serif; color: #7cbf9b; }
.cut { margin-left: auto; margin-top: 3px; }
.menu { width: 40px; margin: 2px 0 0 23px; display: flex; flex-direction: column; gap: 8px; }
.menu i { height: 7px; border-radius: 4px; background: #c9c9c9; }
.card { width: 390px; background: #fff; border: 1px solid #d9d9dc; font-family: "Noto Sans CJK SC", sans-serif; }
.ask { height: 70px; padding: 5px 11px 0 19px; display: flex; align-items: center; justify-content: space-between; }
.score { position: relative; width: 66px; height: 44px; padding-left: 8px; font: 13px/45px "Open Sans", sans-serif; color: #333; }
.score svg { position: absolute; left: 0; top: 0; }
.opt { height: 57px; border-top: 1px solid #d9d9dc; display: flex; align-items: center; gap: 20px; padding-left: 8px; font: 400 31px/54px "Open Sans", sans-serif; color: #77777a; }
.opt span { padding-bottom: 2px; }
.opt svg { margin-top: 4px; }
.opt i { color: #233; }
.add { height: 59px; border-top: 1px solid #d9d9dc; display: flex; align-items: center; gap: 27px; padding-left: 57px; font-size: 24px; font-weight: 350; line-height: 54px; color: #6f6f71; }
.add span { padding-bottom: 2px; }
.sub { height: 45px; padding: 0 0 0 10px; font: 300 21px/53px "Noto Sans CJK SC", sans-serif; color: #c0c0c0; }
.ana { height: 54px; display: flex; align-items: center; padding: 6px 0 0 15px; font-size: 18px; font-weight: 350; color: #000; }
.ana span { width: 75px; height: 33px; line-height: 30px; border-bottom: 1px solid #d9d9dc; }
.foot { display: flex; gap: 1px; padding: 9px 1px 0 0; }
.foot button { flex: 1; height: 38px; padding-top: 20px; border: 0; background: #0a9448; color: #fff; font: 350 20px/20px "Noto Sans CJK SC", sans-serif; box-shadow: 0 0 0 1px #f5f5f5; white-space: nowrap; clip-path: inset(0 -1px 0 0); }

.float { position: absolute; left: 987px; top: 170px; width: 116px; height: 356px; background: #212121; display: flex; flex-direction: column; justify-content: space-between; font: 300 14px/20px "Noto Sans CJK SC", sans-serif; color: #b5b5b5; }
.stats, .top { border: 2px solid #4a4d51; }
.stats { height: 130px; }
.total { height: 63px; border-bottom: 2px solid #4a4d51; }
.cap { display: flex; justify-content: space-between; padding-left: 2px; line-height: 30px; font-size: 14px; color: #8c8c8c; height: 28px; }
.min { width: 28px; height: 28px; border: solid #4a4d51; border-width: 0 0 2px 2px; display: flex; align-items: center; justify-content: center; }
.min::after { content: ""; width: 12px; height: 1px; background: #888; }
.zero { text-align: center; font: 400 17px/36px "Open Sans", sans-serif; }
.fold { height: 44px; line-height: 44px; text-align: center; border-bottom: 2px solid #4a4d51; }
.item { display: flex; padding-left: 18px; font-size: 13px; line-height: 20px; }
.item span:first-child { width: 44px; }
.top { height: 32px; display: flex; align-items: center; justify-content: center; gap: 10px; font-size: 12.500px; }
```
